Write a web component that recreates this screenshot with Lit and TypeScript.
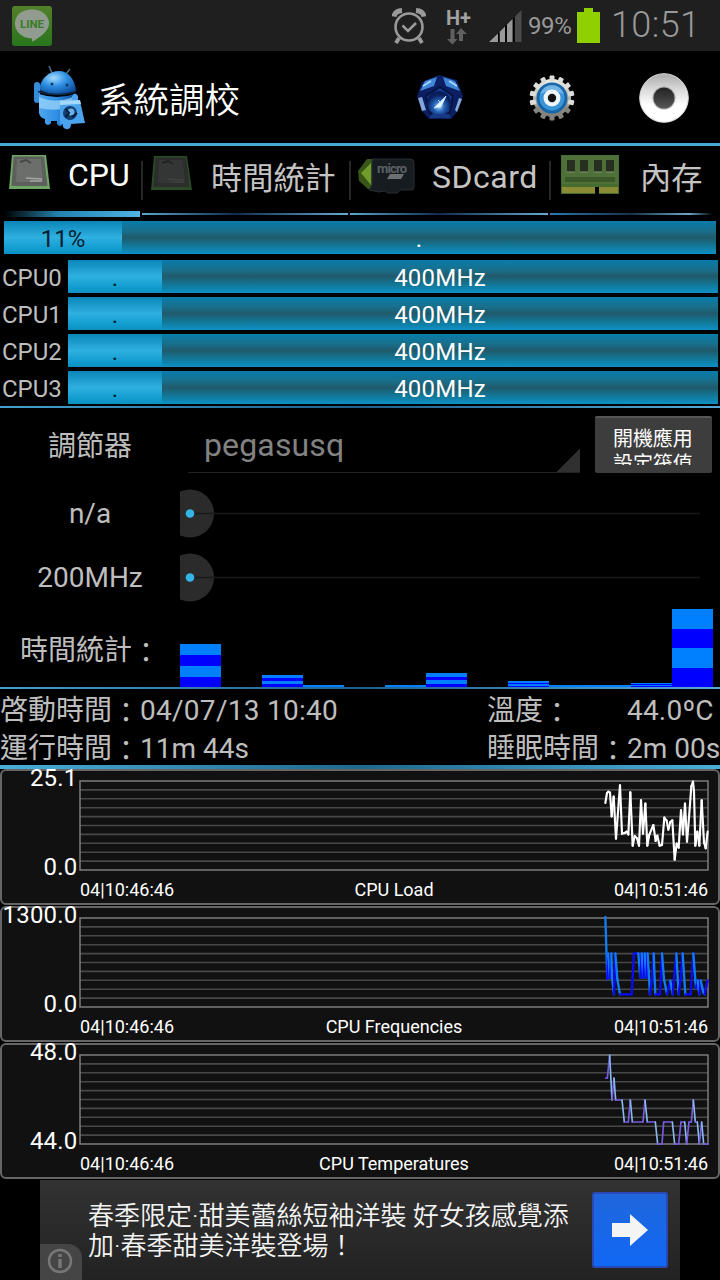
import { LitElement, html, svg, css } from "lit";
import { customElement } from "lit/decorators.js";

type Pt = [number, number];

interface Chart {
  name: string;
  max: string;
  min: string;
  dy: number;
  width: number;
  rise: string;
  fall: string;
  points: Pt[];
}

const LOAD: Pt[] = [[76,114],[81,84],[85,80],[90,83],[95,154],[101,95],[108,221],[120,61],[126,206],[134,204],[140,200],[145,208],[151,82],[158,242],[164,213],[171,220],[177,242],[183,106],[189,206],[196,116],[202,242],[208,209],[220,180],[227,228],[232,212],[239,242],[246,240],[253,158],[260,167],[265,194],[271,171],[277,166],[284,284],[290,236],[296,248],[303,136],[309,208],[315,116],[321,230],[327,158],[334,64],[339,50],[342,80],[346,242],[352,200],[358,242],[365,106],[372,232],[377,250],[383,200]];
const FREQ: Pt[] = [[76,36],[82,222],[84,145],[90,218],[94,145],[96,218],[102,268],[106,145],[112,222],[120,268],[155,268],[162,145],[175,145],[181,218],[185,145],[190,218],[194,145],[199,218],[203,145],[210,268],[216,222],[221,145],[226,268],[240,268],[246,145],[252,222],[261,268],[271,226],[278,268],[289,145],[296,268],[302,222],[308,145],[316,268],[332,268],[340,145],[348,250],[353,226],[358,268],[362,226],[370,262],[374,268],[383,226]];
const TEMP: Pt[] = [[77,114],[82,114],[89,46],[96,180],[102,114],[107,180],[126,180],[133,246],[145,246],[151,180],[157,246],[189,246],[195,180],[202,246],[226,246],[233,312],[246,312],[251,246],[277,246],[284,312],[296,312],[303,246],[314,246],[320,312],[327,246],[334,246],[340,180],[346,246],[352,246],[358,312],[365,246],[371,312],[385,312]];

const CHARTS: Chart[] = [
  { name: "CPU Load", max: "25.1", min: "0.0", dy: -4, width: 6.5, rise: "#fff", fall: "#fff", points: LOAD },
  { name: "CPU Frequencies", max: "1300.0", min: "0.0", dy: -1, width: 7, rise: "#0a0af8", fall: "#0f7cf4", points: FREQ },
  { name: "CPU Temperatures", max: "48.0", min: "44.0", dy: -3, width: 5, rise: "#7a5ae0", fall: "#86b8f0", points: TEMP },
];

const RESIDENCY = [43, 0, 12, 2, 0, 2, 14, 0, 6, 2, 2, 4, 78];

@customElement("chart-panel")
class ChartPanel extends LitElement {
  static properties = { chart: { attribute: false } };
  declare chart: Chart;
  static styles = css`
    :host { display: block; height: 136px; }
    svg { display: block; overflow: visible; font-family: Roboto, sans-serif; }
    .axis { font-size: 24px; fill: #fff; letter-spacing: .2px; }
    .tick { font-size: 18px; fill: #fff; }
  `;
  render() {
    const c = this.chart;
    const segs = c.points.slice(1).map((p, i) => {
      const q = c.points[i];
      return svg`<path d="M${q[0]} ${q[1]}L${p[0]} ${p[1]}" stroke=${p[1] > q[1] ? c.fall : c.rise} />`;
    });
    return html`<svg width="720" height="136" viewBox="0 0 720 136">
      <rect x="1" y="1" width="718" height="134" rx="5" fill="#111" stroke="#666" stroke-width="2" />
      ${Array.from({ length: 9 }, (_, i) => svg`<path d="M80 ${12 + (i + 1) * 8.9}H708" stroke="#484848" stroke-width="1.6" />`)}
      <rect x="80" y="12" width="628" height="89" fill="none" stroke="#7c7c7c" stroke-width="1.5" />
      <text class="axis" x="77.500" y="17" text-anchor="end">${c.max}</text>
      <text class="axis" x="77.500" y="106" text-anchor="end">${c.min}</text>
      <text class="tick" x="80" y="126.500">04|10:46:46</text>
      <text class="tick" x="394" y="126.500" text-anchor="middle">${c.name}</text>
      <text class="tick" x="708" y="126.500" text-anchor="end">04|10:51:46</text>
      <g transform="translate(580 ${c.dy}) scale(.33333)" fill="none" stroke-width=${c.width} stroke-linecap="round">${segs}</g>
    </svg>`;
  }
}

const robot = html`<svg width="54" height="66" viewBox="0 0 54 66">
  <defs>
    <linearGradient id="rb" x1="0" y1="0" x2="1" y2="0"><stop offset="0" stop-color="#4ea6ee"/><stop offset=".5" stop-color="#2f8ee4"/><stop offset="1" stop-color="#0b4596"/></linearGradient>
    <radialGradient id="rh" cx=".4" cy=".3" r=".8"><stop offset="0" stop-color="#a4dcff"/><stop offset=".45" stop-color="#2d8ee2"/><stop offset="1" stop-color="#0a4290"/></radialGradient>
  </defs>
  <path d="M20 8 17 1M34 9 38 4" stroke="#48708e" stroke-width="1.500"/>
  <path d="M7 25C9 12 18 6 27 6s16 8 17 20q-18 7-37-1z" fill="url(#rh)"/>
  <rect x="2" y="17" width="6" height="21" rx="3" fill="#358cd8"/>
  <path d="M7 29q18 6 36 0v22q-3 5-12 5v3q-3 4-6 0v-3h-6v2q-3 4-6 0v-4q-5-1-6-6z" fill="url(#rb)"/>
  <path d="M7 32q16 7 34 0v10q-18 5-34 1z" fill="#9bd4fa" opacity=".75"/>
  <path d="M6 26.500q19 6 38 0" stroke="#0c2c50" stroke-width="1.500" fill="none"/>
  <circle cx="20" cy="19" r="1.500" fill="#123b68"/><circle cx="35" cy="20" r="1.500" fill="#123b68"/>
  <path d="M28 36h12v-5q3-5 6 0v5h2l5 22-14 1q0 6-5 5-4-1-3-5h-3z" fill="#4aa3ec"/>
  <path d="M28 36l20-1 1 4-21 1z" fill="#a4d8fb"/>
  <circle cx="38" cy="48" r="7" fill="#123e72"/><circle cx="39" cy="47" r="3.500" fill="#6cb0e8"/><path d="M34 44l3 4-3 4M40 52l5-4" stroke="#061c36" stroke-width="2" fill="none"/>
</svg>`;

const pentagon = html`<svg width="48" height="48" viewBox="0 0 48 48">
  <defs><radialGradient id="pg" cx=".5" cy=".65" r=".5"><stop offset="0" stop-color="#a6d6ff"/><stop offset=".45" stop-color="#2765b8"/><stop offset="1" stop-color="#091e5c"/></radialGradient></defs>
  <path d="M23 1 41 6l6 16-5 15-7 8H13l-7-8L1 22 6 8z" fill="#0c1f62"/>
  <path d="M4 17 9 7l12-4-3 9z" fill="#3f86d8"/><path d="M44 17 39 7 27 3l3 9z" fill="#3f86d8"/>
  <path d="M7 12l8-5M41 12l-8-5" stroke="#a2d6ff" stroke-width="2"/>
  <path d="M24 13 37 22 34 38 24 44 13 38 10 22z" fill="#153d92" stroke="#071442" stroke-width="2"/>
  <circle cx="23" cy="29" r="12" fill="url(#pg)"/>
  <path d="M18 34 30 22l-5 11zM22 26l3 3" fill="#e8f4ff" stroke="#b2d9fa"/>
  <path d="M2 24l4 13 4-1-4-13zM46 25l-5 13-2-2 4-12z" fill="#82a8da"/><path d="M13 44h22l-2-4H16z" fill="#183a84"/>
</svg>`;

const gear = html`<svg width="48" height="48" viewBox="0 0 48 48">
  <defs><linearGradient id="gg" x1="0" y1="0" x2="0" y2="1"><stop offset="0" stop-color="#f0f0ec"/><stop offset="1" stop-color="#77756f"/></linearGradient></defs>
  <circle cx="24" cy="24" r="19" fill="url(#gg)"/>
  ${Array.from({ length: 14 }, (_, i) => svg`<rect x="21.500" y="1.500" width="5" height="6" rx="1" fill=${i > 4 && i < 10 ? "#85837d" : "#dcdcd8"} transform="rotate(${(i * 360) / 14} 24 24)" />`)}
  <circle cx="24" cy="24" r="15.500" fill="#1767a8"/><circle cx="24" cy="24" r="12.500" fill="#3c95d6"/>
  <path d="M12 20a12.500 12.500 0 0 1 24 0q-12-6-24 0z" fill="#8ac5ec" opacity=".7"/>
  <circle cx="24" cy="24" r="8.500" fill="#eef6fa"/><circle cx="24" cy="24" r="4.200" fill="#111"/>
</svg>`;

const record = html`<svg width="52" height="52" viewBox="0 0 52 52">
  <defs><linearGradient id="rg" x1="0" y1="0" x2="0" y2="1"><stop offset="0" stop-color="#aaa"/><stop offset=".3" stop-color="#d6d6d6"/><stop offset=".65" stop-color="#fff"/></linearGradient>
  <linearGradient id="rk" x1="0" y1="0" x2="0" y2="1"><stop offset="0" stop-color="#222"/><stop offset="1" stop-color="#555"/></linearGradient></defs>
  <circle cx="26" cy="26" r="24.300" fill="url(#rg)" stroke="#ddd"/><circle cx="26" cy="26" r="11.500" fill="#aaa"/><circle cx="26" cy="26" r="10.500" fill="url(#rk)"/>
</svg>`;

const chip = (on: boolean) => html`<svg width="44" height="40" viewBox="0 0 44 40">
  <path d=${on ? "M4 2H38L42 36H1z" : "M4 2H37L42 36H1z"} fill=${on ? "#6fa565" : "#2b4a26"}/><path d="M5.500 3.500H36L39.500 33H3.500z" fill=${on ? "#5c5f5c" : "#2c2e2d"}/>
  <path d="M9 6H33L35 29H8z" fill=${on ? "#6c6e6b" : "#343635"}/><path d="M12 9l6-2 5 3" stroke=${on ? "#454845" : "#222"} fill="none" stroke-width="2"/>
  <path d="M18 25l16 1M22 28h12" stroke=${on ? "#a4a4a4" : "#404040"} stroke-width="1.600"/>
</svg>`;

const sd = html`<svg width="58" height="38" viewBox="0 0 58 38">
  <path d="M1 14 10 2h10v30H11L2 24z" fill="#385618"/><path d="M4 16 14 6v22z" fill="#6f9c2b"/>
  <path d="M15 2h38q4 0 4 4v25q0 2-3 2H43l-3 3H31l-4-2-5 1-10-2 3-5z" fill="#161c20" stroke="#292e32"/>
  <text x="20" y="16" font-family="Roboto" font-size="13" font-weight="700" fill="#5c6064" textLength="30">micro</text>
  <path d="M33 17h14l-3 5H30z" fill="#6c7072"/>
</svg>`;

const ram = html`<svg width="60" height="42" viewBox="0 0 60 42">
  <rect x="1" y="1" width="58" height="39" fill="#466b2e"/><rect x="2" y="2" width="56" height="28" fill="#4f7038"/>
  ${[7, 20, 34, 46].map((x) => svg`<rect x=${x} y="6" width="8" height="12" fill="#262f20"/><path d="M${x} 18h8" stroke="#83976a"/>`)}
  <rect x="5" y="23" width="50" height="5" rx="1" fill="#3a582a"/>
  <rect x="2" y="33" width="56" height="6" fill="#8b8b35"/><rect x="35" y="33" width="4" height="8" fill="#000"/>
</svg>`;

const colon = html`<span class="colon">：</span>`;

@customElement("app-root")
class AppRoot extends LitElement {
  static styles = css`
    :host { display: block; width: 720px; height: 1280px; overflow: hidden; background: #000; color: #bebebe; font-family: Roboto, "Noto Sans CJK TC", sans-serif; }
    * { box-sizing: border-box; }
    svg { display: block; flex: none; }
    .colon { vertical-align: -3px; line-height: 0; }
    .status { height: 51px; background: #1f1f1f; display: flex; align-items: center; padding: 0 20px 0 12px; color: #999; }
    .grow { flex: 1; }
    .alarm { margin-right: 20px; }
    .hplus { margin-right: 15px; }
    .pct { font-size: 24px; width: 50px; padding-left: 6px; line-height: 50px; letter-spacing: -.4px; }
    .batt { margin-left: 5px; }
    .clock { font-size: 36px; line-height: 48px; height: 50px; font-weight: 300; width: 89px; white-space: nowrap; margin-left: 11px; letter-spacing: .4px; }
    .bar { height: 95px; border-bottom: 3px solid #48a8d4; display: flex; align-items: center; padding: 2px 30px 0 32px; color: #fff; }
    .title { font-size: 35.500px; line-height: 50px; margin-left: 12px; font-weight: 350; padding-top: 6px; }
    .a1 { margin-right: 64px; } .a2 { margin-right: 62px; }
    .tabs { display: grid; grid-template-columns: 141px 208px 200px 171px; height: 71px; }
    .tab { display: flex; flex-direction: column; justify-content: space-between; }
    .face { display: flex; height: 60px; font-size: 32px; line-height: 62px; color: #c4c4c4; white-space: nowrap; }
    .tab.on .face { color: #fff; line-height: 59px; }
    .name { margin-left: 17px; }
    .on .name { margin-left: 16px; }
    .sdn { letter-spacing: .5px; }
    .zh { font-size: 31.200px; line-height: 65px; }
    .last .zh { margin-left: 20px; }
    .ic { padding: 8px 0 0 7px; }
    .on .ic { padding: 7px 0 0 8px; }
    .sdi { padding: 11px 0 0 6px; }
    .last .ic { padding-left: 9px; }
    .sep { width: 2px; height: 39px; margin-top: 15px; background: #272727; }
    .under { height: 2px; margin: 0 1px 2px; background: linear-gradient(90deg, #5aa6d0, #102c50 45%, #64aad6); }
    .tab.on .under { height: 6px; margin: 0 1px 0 4px; background: linear-gradient(90deg, #000, #2482ae 40%, #2b8fbd 55%, #50b5e4); }
    .tab.last .under { margin-right: 7px; background: linear-gradient(90deg, #2c78b4, #17304a 50%, #6aa9c8 85%, #000); }
    .track { display: flex; height: 33px; font-size: 24px; line-height: 36px; text-align: center; color: #fff; background: linear-gradient(#087cab, #196f8b 30%, #205a6c 50%, #137492 72%, #0d91c6); }
    .fill { background: linear-gradient(#0b85b8, #2eb0e0 50%, #109bce 85%, #0c90c2); color: #06202c; }
    .rest { flex: 1; letter-spacing: .2px; }
    .total { margin: 4px 4px 0; }
    .total .fill { width: 118px; }
    .cpus { display: grid; gap: 4px; padding: 6px 2px 2px; height: 152px; }
    .cpu { display: grid; grid-template-columns: 66px 650px; font-size: 24px; line-height: 36px; height: 33px; }
    .cpu .fill { width: 94px; }
    .line { height: 2px; background: linear-gradient(90deg, #44a0d0, #1d618c 50%, #56aad6); }
    .gov { display: grid; grid-template-columns: 180px 415px 117px; height: 72px; padding-top: 8px; }
    .lab { text-align: center; font-size: 28px; line-height: 62px; }
    .spin { display: flex; height: 57px; width: 392px; margin-left: 8px; border-bottom: 1px solid #242424; justify-content: space-between; align-items: flex-end; color: #828282; font-size: 32px; padding-left: 16px; }
    .val { height: 57px; line-height: 61px; letter-spacing: .15px; }
    .corner { width: 24px; height: 24px; background: linear-gradient(135deg, transparent 50%, #303030 50%); }
    .btn { height: 57px; background: #3d3d3d; border-top: 2px solid #555; border-radius: 2px; color: #fff; font-size: 20px; line-height: 25px; padding: 9px 18px 0; }
    .clip { height: 38px; overflow: hidden; letter-spacing: -.1px; white-space: nowrap; }
    .slide { display: grid; grid-template-columns: 180px 540px; grid-template-rows: 64px; height: 64px; align-items: center; }
    .slide .lab { line-height: 64px; padding-top: 4px; }
    .slide svg { margin-top: 3px; }
    .stats { display: grid; grid-template-columns: 180px 533px; grid-template-rows: 79px; height: 79px; }
    .stats .lab { line-height: 86px; height: 79px; }
    .hist { display: grid; grid-template-columns: repeat(13, 41px); grid-template-rows: 79px; align-items: end; }
    .col { background: linear-gradient(#0080ff 26%, #00f 26% 50%, #0080ff 50% 76%, #00f 76%); }
    .info { display: grid; grid-template-columns: 487px 140px 93px; grid-template-rows: 38px 38px; height: 76px; font-size: 28px; line-height: 44px; white-space: nowrap; }
    .date { letter-spacing: .27px; }
    .r { text-align: right; }
    .deg { padding-right: 7px; letter-spacing: .2px; }
    .thick { height: 4px; background: linear-gradient(90deg, #48aed8, #1f688e 50%, #48aed8); }
    .charts { display: grid; gap: 1px; height: 410px; margin-bottom: 1px; }
    .ad { height: 100px; width: 640px; margin: 0 auto; background: linear-gradient(#323232, #222); display: flex; }
    .i { align-self: flex-end; width: 42px; height: 36px; background: #454545; border-radius: 0 14px 0 0; }
    .copy { width: 504px; padding: 21px 0 0 6px; color: #f4f4f4; font-size: 26px; line-height: 30px; white-space: nowrap; font-weight: 350; }
    .go { margin: 12px 0 0 6px; width: 76px; height: 76px; border: 2px solid #2a48b8; border-radius: 3px; background: linear-gradient(#2066dc, #1068f4); }
  `;
  render() {
    return html`
      <div class="status">
        <svg width="40" height="40" viewBox="0 0 40 40">
          <defs><linearGradient id="ln" x1="0" y1="0" x2="0" y2="1"><stop offset="0" stop-color="#53802b"/><stop offset="1" stop-color="#28761c"/></linearGradient></defs>
          <rect width="40" height="40" rx="3" fill="url(#ln)"/>
          <path d="M20 3.500c10 0 17 6 17 14 0 7-8 13-16 18q-1 1-1-3C10 32 3 26 3 17.500s7-14 17-14z" fill="#929b90"/>
          <text x="8" y="22" font-family="Roboto" font-weight="700" font-size="11.500" fill="#397c27" textLength="24">LINE</text>
        </svg>
        <div class="grow"></div>
        <svg class="alarm" width="34" height="36" viewBox="0 0 34 36" fill="none" stroke="#999" stroke-width="2.600">
          <circle cx="17" cy="19" r="13.500"/><path d="M10.500 17.500 16 23l8-8"/><path d="M7 30l-3 5M27 30l3 5" stroke-width="4"/><path d="M2 8.500Q3 3 10 2.500M32 8.500Q31 3 24 2.500" stroke-width="5"/>
        </svg>
        <svg class="hplus" width="28" height="38" viewBox="0 0 28 38">
          <text x="0" y="18" font-family="Roboto" font-weight="700" font-size="21" fill="#a2a2a2" textLength="25" lengthAdjust="spacingAndGlyphs">H+</text>
          <path d="M4.500 22h4v10h3L6.500 37.500 1 32h3.500zM13 34h4v-7h4l-6-6-5 6h3z" fill="#606060"/>
        </svg>
        <svg width="33" height="34" viewBox="0 0 33 34"><path d="M0 33 9 24.500V33zM10.500 33V23L16 17.500V33zM18 33V15.500l5.500-5.500v23z" fill="#999"/><path d="M26 33V7.500L32.500 1v32z" fill="#4a4a4a"/><path d="M9.800 33V23.500M17 33V16.500M24.800 33V9" stroke="#000" stroke-width="1.600"/></svg>
        <div class="pct">99%</div>
        <svg class="batt" width="23" height="36" viewBox="0 0 23 36"><path d="M0 4h7V0h9v4h7v31H0z" fill="#91d000"/></svg>
        <div class="clock">10:51</div>
      </div>
      <div class="bar">${robot}<div class="title">系統調校</div><div class="grow"></div>
        <div class="a1">${pentagon}</div><div class="a2">${gear}</div>${record}</div>
      <div class="tabs">
        <div class="tab on"><div class="face"><div class="ic">${chip(true)}</div><span class="name">CPU</span></div><div class="under"></div></div>
        <div class="tab"><div class="face"><i class="sep"></i><div class="ic">${chip(false)}</div><span class="name zh">時間統計</span></div><div class="under"></div></div>
        <div class="tab"><div class="face"><i class="sep"></i><div class="ic sdi">${sd}</div><span class="name sdn">SDcard</span></div><div class="under"></div></div>
        <div class="tab last"><div class="face"><i class="sep"></i><div class="ic">${ram}</div><span class="name zh">內存</span></div><div class="under"></div></div>
      </div>
      <div class="track total"><div class="fill">11%</div><div class="rest">.</div></div>
      <div class="cpus">${[0, 1, 2, 3].map((n) => html`<div class="cpu"><span>CPU${n}</span><div class="track"><div class="fill">.</div><div class="rest">400MHz</div></div></div>`)}</div>
      <div class="line"></div>
      <div class="gov"><div class="lab">調節器</div><div class="spin"><span class="val">pegasusq</span><div class="corner"></div></div><div class="btn"><div class="clip">開機應用<br />設定筏值</div></div></div>
      ${["n/a", "200MHz"].map((t) => html`<div class="slide"><div class="lab">${t}</div><svg width="540" height="50" viewBox="0 0 540 50"><circle cx="10" cy="24.500" r="24" fill="#2b2b2b"/><path d="M10 24.500H520" stroke="#1a1a1a" stroke-width="1.500"/><circle cx="10" cy="24.500" r="4.300" fill="#33b5e5"/></svg></div>`)}
      <div class="stats"><div class="lab">時間統計${colon}</div><div class="hist">${RESIDENCY.map((h) => html`<div class="col" style="height:${h}px"></div>`)}</div></div>
      <div class="line"></div>
      <div class="info"><span>啓動時間${colon}<span class="date">04/07/13 10:40</span></span><span>溫度${colon}</span><span class="r deg">44.0ºC</span><span>運行時間${colon}11m 44s</span><span>睡眠時間${colon}</span><span class="r">2m 00s</span></div>
      <div class="thick"></div>
      <div class="charts">${CHARTS.map((c) => html`<chart-panel .chart=${c}></chart-panel>`)}</div>
      <div class="ad">
        <div class="i"><svg width="42" height="36" viewBox="0 0 42 36"><circle cx="20" cy="17" r="11" fill="none" stroke="#777" stroke-width="2.500"/><path d="M20 10v3M20 15v9" stroke="#777" stroke-width="3.500"/></svg></div>
        <div class="copy">春季限定·甜美蕾絲短袖洋裝 好女孩感覺添<br />加·春季甜美洋裝登場！</div>
        <div class="go"><svg width="72" height="72" viewBox="0 0 72 72"><path d="M18 29H36V20L54 36 36 52V43H18z" fill="#f4f4f4"/></svg></div>
      </div>`;
  }
}
